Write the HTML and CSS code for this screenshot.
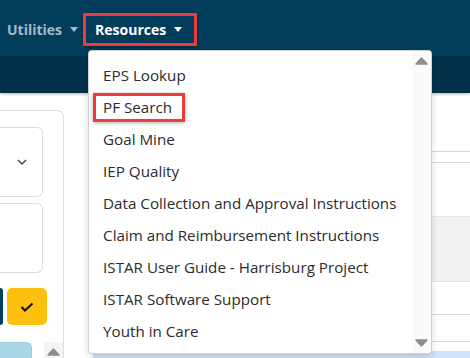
FILE: index.html
```html
<!DOCTYPE html>
<html lang="en">
<head>
    <meta charset="UTF-8">
    <meta name="viewport" content="width=device-width, initial-scale=1.0">
    <title>Resources Menu</title>
    <link rel="stylesheet" href="styles.css">
</head>
<body>
    <header class="topbar">
        <nav class="nav">
            <a class="nav-link muted">Utilities<span class="caret"></span></a>
            <div class="nav-item">
                <a class="nav-link active">Resources<span class="caret"></span></a>
                <div class="dropdown">
                    <ul class="menu">
                        <li class="menu-item">EPS Lookup</li>
                        <li class="menu-item"><span class="mark">PF Search</span></li>
                        <li class="menu-item">Goal Mine</li>
                        <li class="menu-item">IEP Quality</li>
                        <li class="menu-item">Data Collection and Approval Instructions</li>
                        <li class="menu-item">Claim and Reimbursement Instructions</li>
                        <li class="menu-item">ISTAR User Guide - Harrisburg Project</li>
                        <li class="menu-item">ISTAR Software Support</li>
                        <li class="menu-item">Youth in Care</li>
                    </ul>
                    <div class="track">
                        <svg class="arrow" width="13" height="8" viewBox="0 0 13 8"><polygon points="6.5,1 12,7 1,7" /></svg>
                        <svg class="arrow" width="13" height="8" viewBox="0 0 13 8"><polygon points="1,1 12,1 6.5,7" /></svg>
                    </div>
                </div>
            </div>
        </nav>
    </header>
    <div class="subbar"></div>

    <div class="page">
        <aside class="side">
            <div class="card">
                <div class="field">
                    <svg class="chevron" width="10" height="6" viewBox="0 0 10 6"><polyline points="1,1 5,5 9,1" /></svg>
                </div>
                <div class="field"></div>
                <div class="btn-row">
                    <span class="btn btn-dark"></span>
                    <span class="btn btn-warn">
                        <svg width="14" height="10" viewBox="0 0 14 10"><polyline points="1.5,5 5,8.5 12.5,1.5" /></svg>
                    </span>
                </div>
                <div class="bottom-row">
                    <div class="blue-box"></div>
                    <div class="mini-track">
                        <svg class="arrow" width="13" height="8" viewBox="0 0 13 8"><polygon points="6.5,1 12,7 1,7" /></svg>
                    </div>
                </div>
            </div>
        </aside>
        <main class="table">
            <div class="row r1"></div>
            <div class="row r2"></div>
            <div class="row r3"></div>
            <div class="row r4"></div>
            <div class="row r5"></div>
            <div class="row r6"></div>
            <div class="row r7"></div>
            <div class="row r8"></div>
        </main>
    </div>
</body>
</html>
```

FILE: styles.css
```css
body {
    margin: 0;
    font-family: "Open Sans", "Noto Sans", Arial, sans-serif;
    background: #fff;
    color: #212529;
    overflow: hidden;
}
.topbar {
    height: 56px;
    background-color: #023e5b;
    position: relative;
    z-index: 2;
}
.nav {
    display: flex;
    align-items: flex-start;
    padding: 13px 0 0 7px;
}
.nav-link {
    display: flex;
    align-items: center;
    height: 33px;
    font-size: 14px;
    font-weight: 700;
    color: #fff;
    text-decoration: none;
    box-sizing: border-box;
}
.nav-link.muted {
    color: #a4bac8;
    margin-right: 5px;
}
.nav-link.active {
    border: 3px solid #ef3b3d;
    padding: 0 12px 0 9px;
    box-shadow: 0 1px 4px rgba(0, 0, 0, 0.35);
}
.caret {
    display: inline-block;
    margin-left: 8px;
    border-top: 5px solid currentColor;
    border-left: 4px solid transparent;
    border-right: 4px solid transparent;
}
.nav-item {
    position: relative;
}
.dropdown {
    position: absolute;
    top: 37px;
    left: 5px;
    width: 344px;
    height: 304px;
    box-sizing: border-box;
    display: flex;
    background: #fff;
    border: 1px solid rgba(0, 0, 0, 0.18);
    border-radius: 4px;
    box-shadow: 0 2px 6px rgba(0, 0, 0, 0.15);
    overflow: hidden;
}
.menu {
    flex: 1;
    list-style: none;
    margin: 0;
    padding: 8px 0;
}
.menu-item {
    display: flex;
    align-items: center;
    height: 32px;
    padding: 0 14px;
    font-size: 15.2px;
    color: #2b2b2b;
    white-space: nowrap;
}
.mark {
    display: block;
    margin-left: -10px;
    padding: 0 10px 0 7px;
    line-height: 23px;
    border: 3px solid #ef3b3d;
    box-shadow: 0 1px 4px rgba(0, 0, 0, 0.3);
}
.track {
    width: 19px;
    background: #fafafa;
    display: flex;
    flex-direction: column;
    justify-content: space-between;
    align-items: center;
    padding: 6px 0;
}
.arrow polygon {
    fill: #8e8e8e;
    stroke: #8e8e8e;
    stroke-width: 1.5;
    stroke-linejoin: round;
}
.subbar {
    height: 37px;
    background-color: #01304a;
    box-shadow: 0 1px 3px rgba(0, 0, 0, 0.3);
    position: relative;
    z-index: 1;
}
.page {
    display: flex;
    height: 265px;
}
.side {
    width: 64px;
    padding-top: 17px;
}
.card {
    height: 100%;
    box-sizing: border-box;
    border: 1px solid #dcdcdc;
    border-left: none;
    border-bottom: none;
    border-radius: 0 7px 0 0;
    padding-top: 16px;
    display: flex;
    flex-direction: column;
}
.field {
    width: 43px;
    height: 70px;
    box-sizing: border-box;
    border: 1px solid #dcdcdc;
    border-left: none;
    border-radius: 0 6px 6px 0;
    margin-bottom: 6px;
    display: flex;
    align-items: center;
    justify-content: flex-end;
    padding-right: 15px;
}
.chevron polyline {
    fill: none;
    stroke: #444;
    stroke-width: 1.4;
}
.btn-row {
    display: flex;
    gap: 4px;
    margin-top: 9px;
    height: 37px;
}
.btn {
    border-radius: 5px;
    display: flex;
    align-items: center;
    justify-content: center;
}
.btn-dark {
    width: 3px;
    background: #033f5c;
    border-radius: 0 5px 5px 0;
}
.btn-warn {
    width: 40px;
    background: #fdc00f;
}
.btn-warn polyline {
    fill: none;
    stroke: #111;
    stroke-width: 2;
}
.bottom-row {
    display: flex;
    justify-content: space-between;
    margin-top: 17px;
    flex: 1;
}
.blue-box {
    width: 32px;
    background: #a9d7e5;
    border: 1px solid #9fcad8;
    border-left: none;
    border-bottom: none;
    border-radius: 0 6px 0 0;
    box-sizing: border-box;
}
.mini-track {
    width: 19px;
    background: #f4f4f4;
    display: flex;
    justify-content: center;
    padding-top: 6px;
}
.table {
    flex: 1;
    margin-left: 29px;
}
.row {
    border-bottom: 1px solid #d6d6d6;
}
.r1 { height: 58px; }
.r2 { height: 10px; }
.r3 { height: 53px; border-bottom-color: #e6e6e6; }
.r4 { height: 64px; background: #f1f1f1; border-bottom-color: #e0e0e0; }
.r5 { height: 32px; }
.r6 { height: 26px; }
.r7 { height: 9px; border-bottom: none; }
.r8 { height: 20px; background: #cfe2f9; border-bottom: none; }
```
